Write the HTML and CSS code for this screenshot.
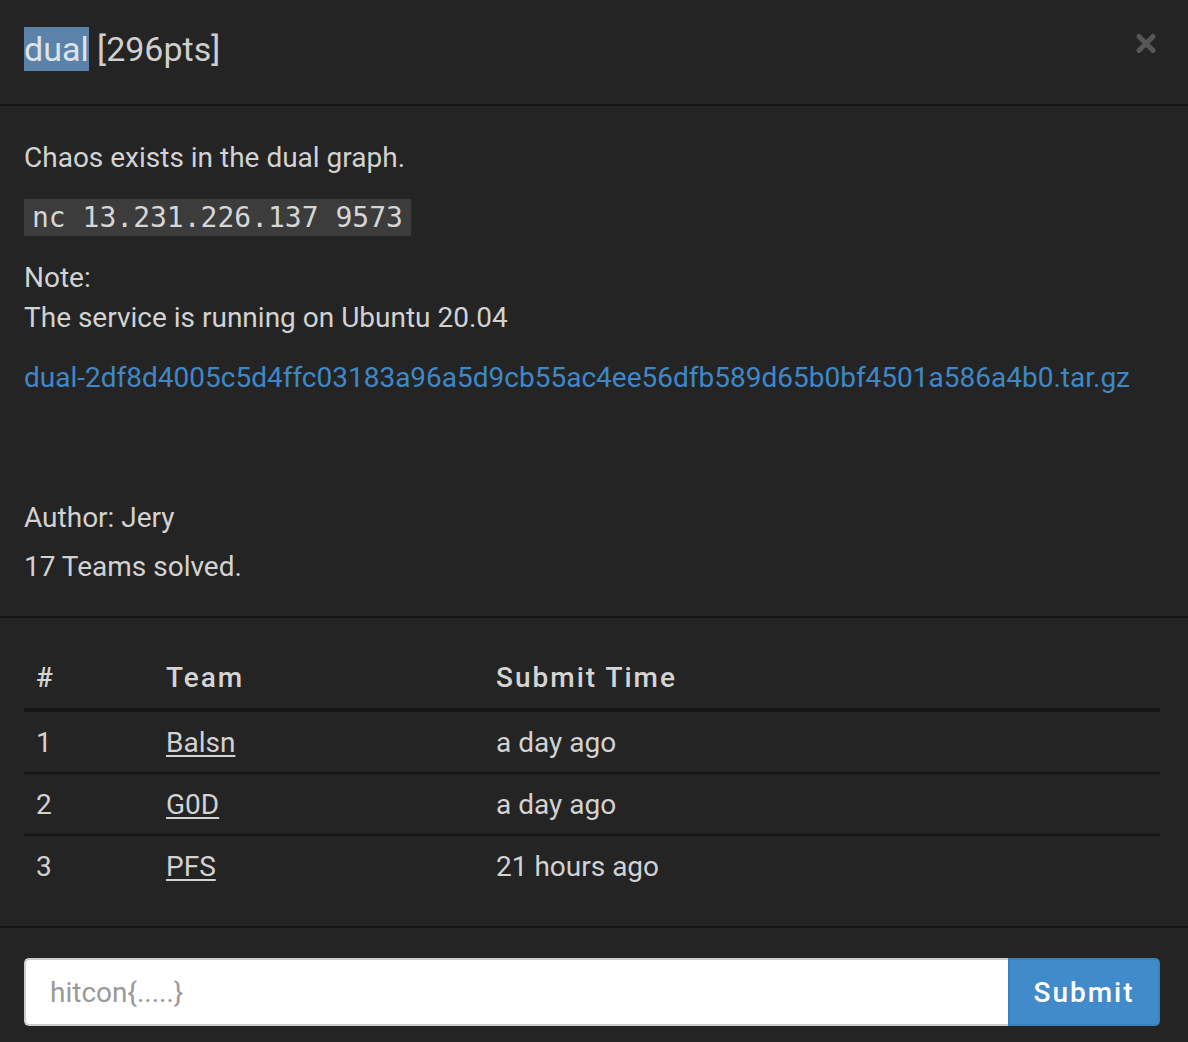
FILE: index.html
```html
<!DOCTYPE html>
<html>
<head>
<meta charset="utf-8">
<link rel="stylesheet" href="styles.css">
</head>
<body>
<div class="modal">
  <div class="modal-header">
    <h4 class="title"><span class="sel">dual</span> [296pts]</h4>
    <button class="close" aria-label="Close">
      <svg width="20" height="21" viewBox="0 0 20 21"><path d="M3 3.5 L17 17.5 M17 3.5 L3 17.5" stroke="#575757" stroke-width="5" stroke-linecap="round"/></svg>
    </button>
  </div>
  <div class="modal-body desc-body">
    <p>Chaos exists in the dual graph.</p>
    <p><code>nc 13.231.226.137 9573</code></p>
    <p>Note:<br>The service is running on Ubuntu 20.04</p>
    <p class="files"><a href="#">dual-2df8d4005c5d4ffc03183a96a5d9cb55ac4ee56dfb589d65b0bf4501a586a4b0.tar.gz</a></p>
    <p class="author">Author: Jery</p>
    <div class="solved">17 Teams solved.</div>
  </div>
  <div class="modal-body table-body">
    <table class="solves">
      <thead>
        <tr><th class="c-rank">#</th><th class="c-team">Team</th><th>Submit Time</th></tr>
      </thead>
      <tbody>
        <tr><td>1</td><td><a href="#">Balsn</a></td><td>a day ago</td></tr>
        <tr><td>2</td><td><a href="#">G0D</a></td><td>a day ago</td></tr>
        <tr><td>3</td><td><a href="#">PFS</a></td><td>21 hours ago</td></tr>
      </tbody>
    </table>
  </div>
  <div class="modal-footer">
    <form class="flag-form">
      <input class="flag-input" type="text" placeholder="hitcon{.....}">
      <button class="submit" type="button">Submit</button>
    </form>
  </div>
</div>
</body>
</html>
```

FILE: styles.css
```css
html, body {
  margin: 0;
  padding: 0;
  background: #242424;
}
body {
  font-family: Roboto, "Noto Sans", sans-serif;
  font-size: 28px;
  line-height: 40px;
  color: #d2d2d2;
  height: 1042px;
  overflow: hidden;
}
.modal {
  width: 1188px;
}
.modal-header {
  height: 104px;
  border-bottom: 2px solid #151515;
  padding: 0 24px;
  display: flex;
  align-items: center;
  justify-content: space-between;
  box-sizing: content-box;
}
.title {
  margin: -7px 0 0;
  font-size: 34px;
  font-weight: 400;
  line-height: 48px;
  color: #cfcfcf;
}
.sel {
  background: #5b83aa;
  color: #dfe3e8;
  padding: 2px 0;
}
.close {
  background: none;
  border: 0;
  padding: 0;
  margin-top: -18px;
  margin-right: 8px;
  width: 20px;
  height: 21px;
  display: flex;
}
.modal-body {
  padding: 30px 28px 30px 24px;
  border-bottom: 2px solid #151515;
}
.modal-body.desc-body {
  padding-top: 32px;
  padding-bottom: 29px;
}
.modal-body p {
  margin: 0 0 20px;
}
code {
  font-family: "DejaVu Sans Mono", monospace;
  font-size: 28px;
  background: #3c3c3c;
  color: #d6d6d6;
  padding: 2px 8px;
}
a {
  color: #3f88c8;
  text-decoration: none;
}
.modal-body p.files {
  margin-bottom: 100px;
}
.modal-body p.author {
  margin-bottom: 9px;
}
.solves {
  width: 100%;
  border-collapse: collapse;
}
.solves th, .solves td {
  text-align: left;
  padding: 10px 12px;
  line-height: 40px;
}
.solves th {
  font-weight: 500;
  letter-spacing: 2px;
  border-bottom: 4px solid #151515;
  color: #d4d4d4;
}
.solves td {
  border-top: 2px solid #151515;
  padding: 11px 12px 9px;
}
.solves tbody tr:first-child td {
  border-top: 0;
}
.solves .c-rank { width: 106px; }
.solves .c-team { width: 306px; }
.solves td a {
  color: #d2d2d2;
  text-decoration: underline;
  text-underline-offset: 3px;
}
.modal-footer {
  padding: 30px 28px 0 24px;
}
.flag-form {
  display: flex;
  height: 68px;
}
.flag-input {
  flex: 1;
  box-sizing: border-box;
  height: 68px;
  border: 2px solid #cccccc;
  border-right: 0;
  border-radius: 5px 0 0 5px;
  background: #ffffff;
  padding: 0 24px;
  font-family: Roboto, "Noto Sans", sans-serif;
  font-size: 28px;
  color: #555;
  outline: none;
}
.flag-input::placeholder {
  color: #999999;
}
.submit {
  box-sizing: border-box;
  width: 152px;
  height: 68px;
  background: #428bca;
  border: 2px solid #3b7fbb;
  border-radius: 0 5px 5px 0;
  color: #ffffff;
  font-family: Roboto, "Noto Sans", sans-serif;
  font-size: 28px;
  font-weight: 500;
  letter-spacing: 2px;
  padding: 0;
}
```
